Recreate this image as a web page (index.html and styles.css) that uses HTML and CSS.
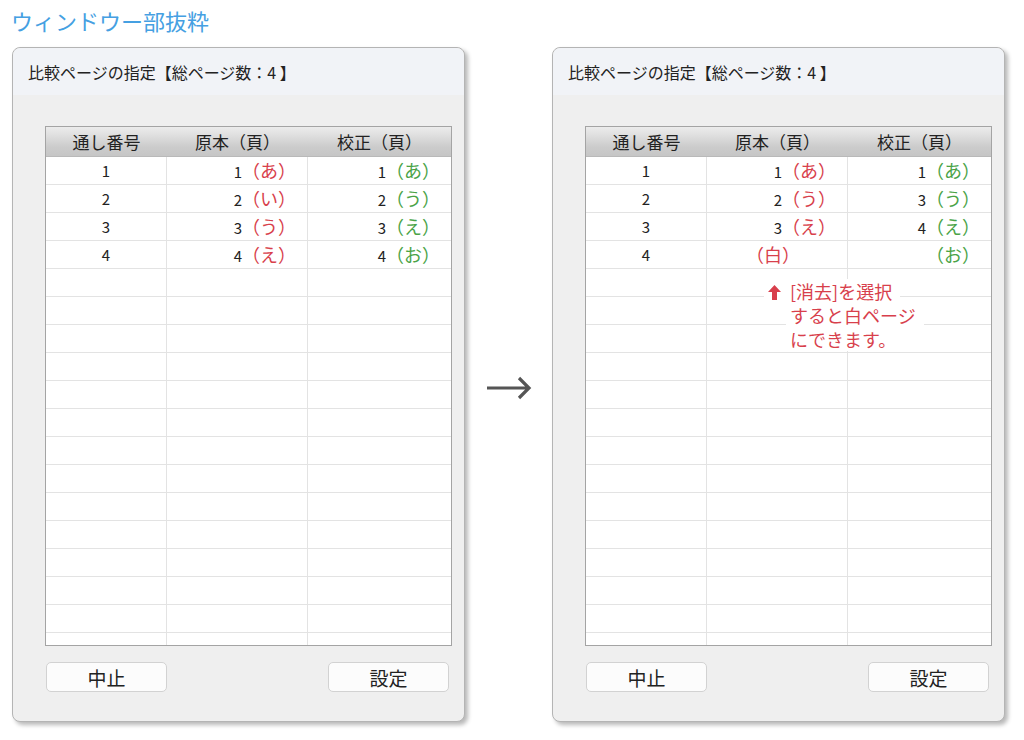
FILE: index.html
```html
<!DOCTYPE html>
<html lang="ja">
<head>
    <meta charset="UTF-8">
    <title>ウィンドウー部抜粋</title>
    <link rel="stylesheet" href="styles.css">
</head>
<body>
    <h1 class="heading">ウィンドウー部抜粋</h1>

    <div class="windows">
        <div class="window">
            <div class="window-title">比較ページの指定【総ページ数：4 】</div>
            <div class="window-body">
                <div class="grid">
                    <div class="grid-head">
                        <div>通し番号</div>
                        <div>原本（頁）</div>
                        <div>校正（頁）</div>
                    </div>
                    <div class="grid-rows" id="leftRows"></div>
                </div>
                <div class="buttons">
                    <button>中止</button>
                    <button>設定</button>
                </div>
            </div>
        </div>

        <div class="arrow">
            <svg width="46" height="28" viewBox="0 0 46 28">
                <path d="M1 14 H43 M33 4 L43 14 L33 24" fill="none" stroke="#555" stroke-width="3.2"/>
            </svg>
        </div>

        <div class="window">
            <div class="window-title">比較ページの指定【総ページ数：4 】</div>
            <div class="window-body">
                <div class="grid">
                    <div class="grid-head">
                        <div>通し番号</div>
                        <div>原本（頁）</div>
                        <div>校正（頁）</div>
                    </div>
                    <div class="grid-rows" id="rightRows"></div>
                    <div class="note">
                        <div class="note-line first">
                            <svg width="13" height="15" viewBox="0 0 13 15"><path d="M6.5 0 L13 7 H9 V15 H4 V7 H0 Z" fill="#d83f4c"/></svg>[消去]を選択
                        </div>
                        <div class="note-line">すると白ページ</div>
                        <div class="note-line">にできます。</div>
                    </div>
                </div>
                <div class="buttons">
                    <button>中止</button>
                    <button>設定</button>
                </div>
            </div>
        </div>
    </div>

    <script>
        // [num, orig page, orig mark, proof page, proof mark]
        const leftData = [
            ['1', '1', 'あ', '1', 'あ'],
            ['2', '2', 'い', '2', 'う'],
            ['3', '3', 'う', '3', 'え'],
            ['4', '4', 'え', '4', 'お']
        ];
        const rightData = [
            ['1', '1', 'あ', '1', 'あ'],
            ['2', '2', 'う', '3', 'う'],
            ['3', '3', 'え', '4', 'え'],
            ['4', '', '白', '', 'お']
        ];

        const fillRows = (id, data) => {
            const rows = document.getElementById(id);
            for (let i = 0; i < 18; i++) {
                const row = document.createElement('div');
                row.className = 'grid-row';
                const d = data[i];
                if (d) {
                    const blank = d[2] === '白' ? ' blank' : '';
                    row.innerHTML =
                        `<div class="c-num">${d[0]}</div>` +
                        `<div class="c-page">${d[1]}<span class="mark red${blank}">（${d[2]}）</span></div>` +
                        `<div class="c-page">${d[3]}<span class="mark green">（${d[4]}）</span></div>`;
                } else {
                    row.innerHTML = '<div></div><div></div><div></div>';
                }
                rows.appendChild(row);
            }
        };

        fillRows('leftRows', leftData);
        fillRows('rightRows', rightData);
    </script>
</body>
</html>
```

FILE: styles.css
```css
* {
    margin: 0;
    padding: 0;
    box-sizing: border-box;
}

body {
    background: #fff;
    font-family: "Noto Sans CJK JP", sans-serif;
    color: #222;
    padding: 4px 0 0 12px;
    width: 1024px;
    height: 740px;
    overflow: hidden;
}

.heading {
    font-size: 22px;
    font-weight: normal;
    color: #45a0e2;
    line-height: 32px;
    height: 32px;
    margin-left: -1px;
}

.windows {
    display: flex;
    align-items: center;
    margin-top: 11px;
}

.window {
    width: 453px;
    height: 675px;
    border: 1px solid #b4b4b4;
    border-radius: 8px;
    background: #efefef;
    box-shadow: 3px 3px 4px rgba(0, 0, 0, 0.28);
    display: flex;
    flex-direction: column;
}

.window-title {
    height: 47px;
    background: #f1f3f7;
    border-radius: 8px 8px 0 0;
    padding-left: 15px;
    font-size: 16px;
    white-space: pre;
    display: flex;
    align-items: center;
}

.window-body {
    padding: 31px 12px 0 32px;
}

.grid {
    width: 407px;
    height: 520px;
    border: 1px solid #a4a4a4;
    background: #fff;
    position: relative;
    display: flex;
    flex-direction: column;
}

.grid-head {
    display: grid;
    grid-template-columns: 121px 141px 1fr;
    height: 30px;
    border-bottom: 1px solid #b9b9b9;
    background: linear-gradient(to bottom, #ececec 0%, #dcdcdc 35%, #cbcbcb 70%, #c6c6c6 100%);
    font-size: 17px;
    line-height: 29px;
    text-align: center;
}

.grid-rows {
    flex: 1;
    overflow: hidden;
}

.grid-row {
    display: grid;
    grid-template-columns: 121px 141px 1fr;
    height: 28px;
    border-bottom: 1px solid #e3e3e3;
    font-size: 15px;
    line-height: 27px;
}

.grid-row > div {
    border-right: 1px solid #e3e3e3;
    white-space: nowrap;
}

.grid-row > div:last-child {
    border-right: none;
}

.c-num {
    text-align: center;
}

.c-page {
    text-align: right;
    padding-right: 11px;
}

.mark {
    font-size: 18px;
}

.mark.red {
    color: #d83f4c;
}

.mark.green {
    color: #4aa347;
}

.mark.blank {
    margin-right: 36px;
}

.note {
    position: absolute;
    left: 178px;
    top: 152px;
    color: #d83f4c;
    font-size: 18px;
    line-height: 24px;
}

.note-line {
    background: #fff;
    width: fit-content;
    padding: 0 8px 0 4px;
    margin-left: 22px;
}

.note-line.first {
    margin-left: 0;
    padding-left: 4px;
}

.note-line svg {
    margin-right: 9px;
    vertical-align: -1px;
}

.buttons {
    display: flex;
    justify-content: space-between;
    margin-top: 16px;
    padding-left: 1px;
    padding-right: 3px;
}

button {
    width: 121px;
    height: 30px;
    background: #fcfcfc;
    border: 1px solid #d2d2d2;
    border-radius: 5px;
    font-family: "Noto Sans CJK JP", sans-serif;
    font-size: 19px;
    color: #222;
}

.arrow {
    width: 87px;
    display: flex;
    justify-content: center;
    padding-left: 1px;
    margin-top: 6px;
}
```
